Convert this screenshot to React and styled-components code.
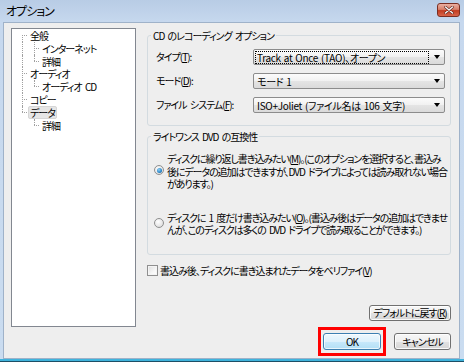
import React from 'react';
import styled, { createGlobalStyle, css } from 'styled-components';

const FONT = `"Noto Sans CJK JP", "Noto Sans", sans-serif`;

const GlobalStyle = createGlobalStyle`
  html, body { margin: 0; padding: 0; background: #fff; }
  body {
    font-family: ${FONT};
    font-size: 10px;
    letter-spacing: -1px;
    word-spacing: 2px;
    color: #000;
    font-feature-settings: "palt";
  }
  #root { width: 464px; height: 362px; }
  u { text-underline-offset: 1px; }
`;

const Window = styled.div`
  width: 464px;
  height: 362px;
  box-sizing: border-box;
  display: flex;
  flex-direction: column;
  padding: 0 4px 3px 3px;
  background: linear-gradient(180deg, #b8cce5 0px, #c6d8ee 22px, #cadcf0 calc(100% - 3px), #3fb3dc calc(100% - 3px), #3fb3dc calc(100% - 1px), #1d4f66 calc(100% - 1px));
`;

const TitleBar = styled.div`
  height: 22px;
  display: flex;
  justify-content: space-between;
  align-items: flex-start;
  flex-shrink: 0;
`;

const Title = styled.div`
  font-size: 12px;
  line-height: 22px;
  padding-left: 3px;
  color: #000;
`;

const CloseBtn = styled.div`
  width: 23px;
  height: 14px;
  margin-top: 3px;
  box-sizing: border-box;
  border: 1px solid #7a2e22;
  border-radius: 3px;
  background: linear-gradient(180deg, #eab0a2 0%, #d8806b 45%, #c23c20 55%, #d8654a 100%);
  display: flex;
  align-items: center;
  justify-content: center;
`;

const Body = styled.div`
  flex: 1;
  background: #eeeeee;
  border: 1px solid #9fb2c9;
  padding: 5px 8px 2px 7px;
  display: flex;
  flex-direction: column;
`;

const Main = styled.div`
  display: flex;
  gap: 11px;
  height: 299px;
  flex-shrink: 0;
`;

const Tree = styled.div`
  width: 125px;
  box-sizing: border-box;
  border: 1px solid #828790;
  background: #fff;
`;

const TreeRow = styled.div`
  position: relative;
  height: 12.8px;
  line-height: 12.8px;
  padding-left: ${p => 17 + p.$level * 12}px;
  white-space: nowrap;
`;

const Guide = styled.span`
  position: absolute;
  left: ${p => p.$x}px;
  width: 0;
  border-left: 1px dotted #a0a0a0;
  top: ${p => (p.$from === 'mid' ? '6px' : '0')};
  bottom: ${p => (p.$to === 'mid' ? '6.8px' : '0')};
`;

const Connector = styled.span`
  position: absolute;
  left: ${p => p.$x}px;
  width: 5px;
  top: 6px;
  height: 0;
  border-top: 1px dotted #a0a0a0;
`;

const TreeLabel = styled.span`
  display: inline-block;
  line-height: 11px;
  padding: 0 1px;
  margin-left: -1px;
  border: 1px solid transparent;
  ${p => p.$selected && css`
    background: #e6e6e6;
    border-color: #d6d6d6;
    border-radius: 2px;
  `}
`;

const Right = styled.div`
  flex: 1;
  display: flex;
  flex-direction: column;
  min-width: 0;
`;

const GroupBox = styled.div`
  position: relative;
  border: 1px solid #d3dbe0;
  border-radius: 3px;
  margin-top: ${p => p.$mt}px;
  padding: ${p => p.$pad};
`;

const GroupTitle = styled.span`
  position: absolute;
  top: -7px;
  left: 3px;
  padding: 0 2px;
  line-height: 13px;
  background: #eeeeee;
  white-space: nowrap;
`;

const FieldGrid = styled.div`
  display: grid;
  grid-template-columns: 97px 192px;
  row-gap: 8px;
  align-items: center;
`;

const FieldLabel = styled.span`
  white-space: nowrap;
  line-height: 12px;
`;

const Combo = styled.div`
  height: 16px;
  box-sizing: border-box;
  border: 1px solid #8c8c8c;
  border-radius: 2px;
  background: linear-gradient(180deg, #fbfbfb 0%, #f1f1f1 50%, #e5e5e5 50%, #dadada 100%);
  display: flex;
  align-items: center;
  padding: 0 4px 0 2px;
  gap: 6px;
`;

const ComboText = styled.span`
  flex: 1;
  line-height: 11px;
  padding: 0 1px;
  letter-spacing: -0.3px;
  word-spacing: 1px;
  white-space: nowrap;
  outline: ${p => (p.$focus ? '1px dotted #000' : 'none')};
`;

const Arrow = styled.span`
  width: 0;
  height: 0;
  border-left: 3.5px solid transparent;
  border-right: 3.5px solid transparent;
  border-top: 4px solid #000;
`;

const RadioRow = styled.div`
  display: flex;
  align-items: center;
  gap: 3px;
  margin-top: ${p => p.$mt || 0}px;
`;

const Radio = styled.span`
  width: 10px;
  height: 10px;
  box-sizing: border-box;
  flex-shrink: 0;
  border-radius: 50%;
  border: 1px solid #8e8f8f;
  background: radial-gradient(circle at 40% 35%, #ffffff 0%, #e6e6e6 60%, #cfcfcf 100%);
  display: flex;
  align-items: center;
  justify-content: center;
  margin-top: -3px;
  &::after {
    content: '';
    display: ${p => (p.$checked ? 'block' : 'none')};
    width: 5px;
    height: 5px;
    border-radius: 50%;
    background: radial-gradient(circle at 40% 35%, #8fd0f5 0%, #2a86c8 60%, #13508a 100%);
  }
`;

const RadioText = styled.div`
  line-height: 12.5px;
  letter-spacing: -1.1px;
  white-space: nowrap;
`;

const CheckRow = styled.div`
  display: flex;
  align-items: center;
  gap: 2px;
  margin-top: 10px;
`;

const CheckBox = styled.span`
  width: 11px;
  height: 11px;
  box-sizing: border-box;
  border: 1px solid #8f8f8f;
  background: linear-gradient(135deg, #dcdcdc 0%, #f6f6f6 60%, #ffffff 100%);
  box-shadow: inset 0 0 0 1px #f4f4f4;
`;

const CheckText = styled.span`
  line-height: 12px;
  white-space: nowrap;
`;

const DefaultRow = styled.div`
  margin-top: auto;
  padding-bottom: 6px;
  display: flex;
  justify-content: flex-end;
`;

const Button = styled.button`
  font-family: ${FONT};
  font-size: 10px;
  letter-spacing: -1px;
  font-feature-settings: "palt";
  color: #000;
  white-space: nowrap;
  width: ${p => p.$w}px;
  height: ${p => p.$h || 17}px;
  padding: 0;
  box-sizing: border-box;
  border: 1px solid #707070;
  border-radius: 3px;
  background: linear-gradient(180deg, #f7f7f7 0%, #efefef 50%, #e2e2e2 50%, #d6d6d6 100%);
  box-shadow: inset 0 0 0 1px rgba(255, 255, 255, 0.85);
  line-height: 1;
  ${p => p.$default && css`
    border-color: #3c7fb1;
    background: linear-gradient(180deg, #eef8fd 0%, #ddf1fc 50%, #c8e9fb 50%, #b3dff5 100%);
    box-shadow: inset 0 0 0 1px rgba(255, 255, 255, 0.7);
  `}
`;

const ButtonRow = styled.div`
  display: flex;
  justify-content: flex-end;
  align-items: center;
  gap: 8px;
`;

const Highlight = styled.div`
  border: 3px solid #ff0000;
  padding: 3px 2px;
  display: flex;
`;

const treeItems = [
  { label: '全般', level: 0, guides: [{ x: 10, from: 'mid', to: 'bottom' }] },
  { label: 'インターネット', level: 1, guides: [{ x: 10, from: 'top', to: 'bottom' }, { x: 22, from: 'top', to: 'bottom' }] },
  { label: '詳細', level: 1, guides: [{ x: 10, from: 'top', to: 'bottom' }, { x: 22, from: 'top', to: 'mid' }] },
  { label: 'オーディオ', level: 0, guides: [{ x: 10, from: 'top', to: 'bottom' }] },
  { label: 'オーディオ CD', level: 1, guides: [{ x: 10, from: 'top', to: 'bottom' }, { x: 22, from: 'top', to: 'mid' }] },
  { label: 'コピー', level: 0, guides: [{ x: 10, from: 'top', to: 'bottom' }] },
  { label: 'データ', level: 0, selected: true, guides: [{ x: 10, from: 'top', to: 'mid' }] },
  { label: '詳細', level: 1, guides: [{ x: 22, from: 'top', to: 'mid' }] },
];

const fields = [
  { label: <>タイプ(<u>T</u>):</>, value: 'Track at Once (TAO)、オープン', focus: true },
  { label: <>モード(<u>D</u>):</>, value: 'モード 1' },
  { label: <>ファイル システム(<u>F</u>):</>, value: 'ISO+Joliet (ファイル名は 106 文字)' },
];

export default function App() {
  return (
    <>
      <GlobalStyle />
      <Window>
        <TitleBar>
          <Title>オプション</Title>
          <CloseBtn>
            <svg width="10" height="8" viewBox="0 0 10 8">
              <path d="M1.5 1 L8.5 7 M8.5 1 L1.5 7" stroke="#5a1a10" strokeWidth="2.6" strokeLinecap="round" />
              <path d="M1.5 1 L8.5 7 M8.5 1 L1.5 7" stroke="#f4f4f4" strokeWidth="1.6" strokeLinecap="round" />
            </svg>
          </CloseBtn>
        </TitleBar>
        <Body>
          <Main>
            <Tree>
              {treeItems.map((it, i) => (
                <TreeRow key={i} $level={it.level}>
                  {it.guides.map((g, j) => (
                    <Guide key={j} $x={g.x} $from={g.from} $to={g.to} />
                  ))}
                  <Connector $x={it.level === 0 ? 10 : 22} />
                  <TreeLabel $selected={it.selected}>{it.label}</TreeLabel>
                </TreeRow>
              ))}
            </Tree>
            <Right>
              <GroupBox $mt={7} $pad="13px 4px 12px 8px">
                <GroupTitle>CD のレコーディング オプション</GroupTitle>
                <FieldGrid>
                  {fields.map((f, i) => (
                    <React.Fragment key={i}>
                      <FieldLabel>{f.label}</FieldLabel>
                      <Combo>
                        <ComboText $focus={f.focus}>{f.value}</ComboText>
                        <Arrow />
                      </Combo>
                    </React.Fragment>
                  ))}
                </FieldGrid>
              </GroupBox>
              <GroupBox $mt={10} $pad="16px 4px 17px 6px">
                <GroupTitle>ライトワンス DVD の互換性</GroupTitle>
                <RadioRow>
                  <Radio $checked />
                  <RadioText>
                    ディスクに繰り返し書き込みたい(<u>M</u>)。(このオプションを選択すると、書込み<br />
                    後にデータの追加はできますが、DVD ドライブによっては読み取れない場合<br />
                    があります。)
                  </RadioText>
                </RadioRow>
                <RadioRow $mt={21}>
                  <Radio />
                  <RadioText>
                    ディスクに 1 度だけ書き込みたい(<u>O</u>)。(書込み後はデータの追加はできませ<br />
                    んが、このディスクは多くの DVD ドライブで読み取ることができます。)
                  </RadioText>
                </RadioRow>
              </GroupBox>
              <CheckRow>
                <CheckBox />
                <CheckText>書込み後、ディスクに書き込まれたデータをベリファイ(<u>V</u>)</CheckText>
              </CheckRow>
              <DefaultRow>
                <Button $w={82} $h={16}>デフォルトに戻す(<u>R</u>)</Button>
              </DefaultRow>
            </Right>
          </Main>
          <ButtonRow>
            <Highlight>
              <Button $w={58} $default>OK</Button>
            </Highlight>
            <Button $w={57}>キャンセル</Button>
          </ButtonRow>
        </Body>
      </Window>
    </>
  );
}
